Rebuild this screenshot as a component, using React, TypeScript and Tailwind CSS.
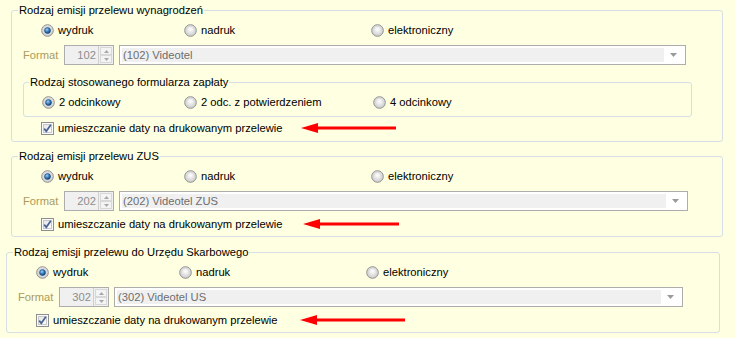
import React from "react";

const FONT = { fontFamily: '"Liberation Sans", Arial, sans-serif' };

function Radio({ checked }: { checked?: boolean }) {
  return (
    <svg width="13" height="13" viewBox="0 0 13 13" className="shrink-0">
      <defs>
        <radialGradient id="rfill" cx="50%" cy="40%" r="60%">
          <stop offset="0%" stopColor="#ffffff" />
          <stop offset="100%" stopColor="#c9c9c9" />
        </radialGradient>
        <radialGradient id="rdot" cx="40%" cy="35%" r="70%">
          <stop offset="0%" stopColor="#9fd0f5" />
          <stop offset="60%" stopColor="#2a6fb0" />
          <stop offset="100%" stopColor="#0d3a6e" />
        </radialGradient>
      </defs>
      <circle cx="6.5" cy="6.5" r="5.8" fill="url(#rfill)" stroke="#8f8f8f" strokeWidth="1" />
      <circle cx="6.5" cy="6.5" r="4.3" fill="none" stroke="#d9d9d9" strokeWidth="1" />
      {checked && <circle cx="6.5" cy="6.5" r="3" fill="url(#rdot)" stroke="#1b4a7a" strokeWidth="0.6" />}
    </svg>
  );
}

function Check() {
  return (
    <svg width="13" height="13" viewBox="0 0 13 13" className="shrink-0">
      <defs>
        <linearGradient id="cfill" x1="0" y1="0" x2="1" y2="1">
          <stop offset="0%" stopColor="#e4e4e4" />
          <stop offset="100%" stopColor="#ffffff" />
        </linearGradient>
      </defs>
      <rect x="0.5" y="0.5" width="12" height="12" fill="#fafafa" stroke="#8f8f8f" />
      <rect x="2.5" y="2.5" width="8" height="8" fill="url(#cfill)" stroke="#c8c8c8" />
      <path d="M3.2 6.6 L5.3 9.2 L9.8 2.8" fill="none" stroke="#4b6595" strokeWidth="1.8" />
    </svg>
  );
}

function Arrow({ width }: { width: number }) {
  return (
    <svg width={width} height="12" viewBox={`0 0 ${width} 12`} className="shrink-0">
      <rect x="14" y="4.5" width={width - 14} height="3" fill="#ff0000" />
      <polygon points={`0,6 17,1 17,11`} fill="#ff0000" />
    </svg>
  );
}

function RadioOpt({ label, checked, w }: { label: string; checked?: boolean; w?: string }) {
  return (
    <div className={`flex items-center gap-[4px] ${w ?? ""}`}>
      <Radio checked={checked} />
      <span>{label}</span>
    </div>
  );
}

function Spinner({ value }: { value: string }) {
  return (
    <div className="flex h-[20px] w-[50px] border border-[#adadad] bg-[#f0f0f0]">
      <div className="flex-1 text-right pr-[2px] leading-[18px] text-[#8d8d8d]">{value}</div>
      <div className="flex w-[15px] flex-col border-l border-[#cfcfcf] p-[1px] gap-[0px]">
        <div className="flex flex-1 items-center justify-center border border-[#d8d8d8] bg-[#f4f4f4]">
          <svg width="5" height="3" viewBox="0 0 5 3"><polygon points="0,3 2.5,0 5,3" fill="#a8a8a8" /></svg>
        </div>
        <div className="flex flex-1 items-center justify-center border border-[#d8d8d8] bg-[#f4f4f4]">
          <svg width="5" height="3" viewBox="0 0 5 3"><polygon points="0,0 5,0 2.5,3" fill="#a8a8a8" /></svg>
        </div>
      </div>
    </div>
  );
}

function Combo({ text, width }: { text: string; width: number }) {
  return (
    <div className="flex h-[20px] border border-[#adadad] bg-white p-[2px]" style={{ width }}>
      <div className="flex-1 bg-[#f0f0f0] pl-[1px] leading-[14px] text-[#6d6d6d]">{text}</div>
      <div className="flex w-[19px] items-center justify-center">
        <svg width="7" height="4" viewBox="0 0 7 4"><polygon points="0,0 7,0 3.5,4" fill="#9a9a9a" /></svg>
      </div>
    </div>
  );
}

function Group({
  title,
  ml,
  w,
  mt,
  pb,
  spin,
  combo,
  comboW,
  arrowW,
  labelW,
  sub,
}: {
  title: string;
  ml: string;
  w: string;
  mt: string;
  pb: string;
  spin: string;
  combo: string;
  comboW: number;
  arrowW: number;
  labelW: string;
  sub?: boolean;
}) {
  return (
    <fieldset className={`${ml} ${w} ${mt} ${pb} rounded-[3px] border border-[#d5dfe5] px-0`}>
      <legend className="ml-[6px] px-[1px] leading-[14px]">{title}</legend>
      <div className="flex h-[27px] items-center pl-[29px]">
        <RadioOpt label="wydruk" checked w="w-[143px]" />
        <RadioOpt label="nadruk" w="w-[187px]" />
        <RadioOpt label="elektroniczny" />
      </div>
      <div className="flex h-[22px] items-center">
        <span className="ml-[11px] w-[41px] text-[#ad9a5c]">Format</span>
        <Spinner value={spin} />
        <div className="w-[5px]" />
        <Combo text={combo} width={comboW} />
      </div>
      {sub && (
        <fieldset className="ml-[11px] mr-[30px] mt-[9px] rounded-[3px] border border-[#d5dfe5] px-0 pb-0">
          <legend className="ml-[5px] px-[1px] leading-[14px]">Rodzaj stosowanego formularza zapłaty</legend>
          <div className="flex h-[27px] items-center pl-[18px]">
            <RadioOpt label="2 odcinkowy" checked w="w-[142px]" />
            <RadioOpt label="2 odc. z potwierdzeniem" w="w-[189px]" />
            <RadioOpt label="4 odcinkowy" />
          </div>
        </fieldset>
      )}
      <div className={`flex h-[20px] items-center pl-[29px] ${sub ? "mt-[1px]" : "mt-[2px]"}`}>
        <Check />
        <span className={`ml-[4px] ${labelW}`}>umieszczanie daty na drukowanym przelewie</span>
        <Arrow width={arrowW} />
      </div>
    </fieldset>
  );
}

export default function App() {
  return (
    <div className="h-[338px] w-[735px] overflow-hidden bg-[#ffffe1] pt-[3px] text-[11.2px] text-black" style={FONT}>
      <Group
        title="Rodzaj emisji przelewu wynagrodzeń"
        ml="ml-[11px]"
        w="w-[712px]"
        mt="mt-0"
        pb="pb-[3px]"
        spin="102"
        combo="(102) Videotel"
        comboW={567}
        arrowW={95}
        labelW="w-[243px]"
        sub
      />
      <Group
        title="Rodzaj emisji przelewu ZUS"
        ml="ml-[11px]"
        w="w-[712px]"
        mt="mt-[7px]"
        pb="pb-[2px]"
        spin="202"
        combo="(202) Videotel ZUS"
        comboW={569}
        arrowW={96}
        labelW="w-[245px]"
      />
      <Group
        title="Rodzaj emisji przelewu do Urzędu Skarbowego"
        ml="ml-[6px]"
        w="w-[714px]"
        mt="mt-[8px]"
        pb="pb-[2px]"
        spin="302"
        combo="(302) Videotel US"
        comboW={569}
        arrowW={105}
        labelW="w-[247px]"
      />
    </div>
  );
}
